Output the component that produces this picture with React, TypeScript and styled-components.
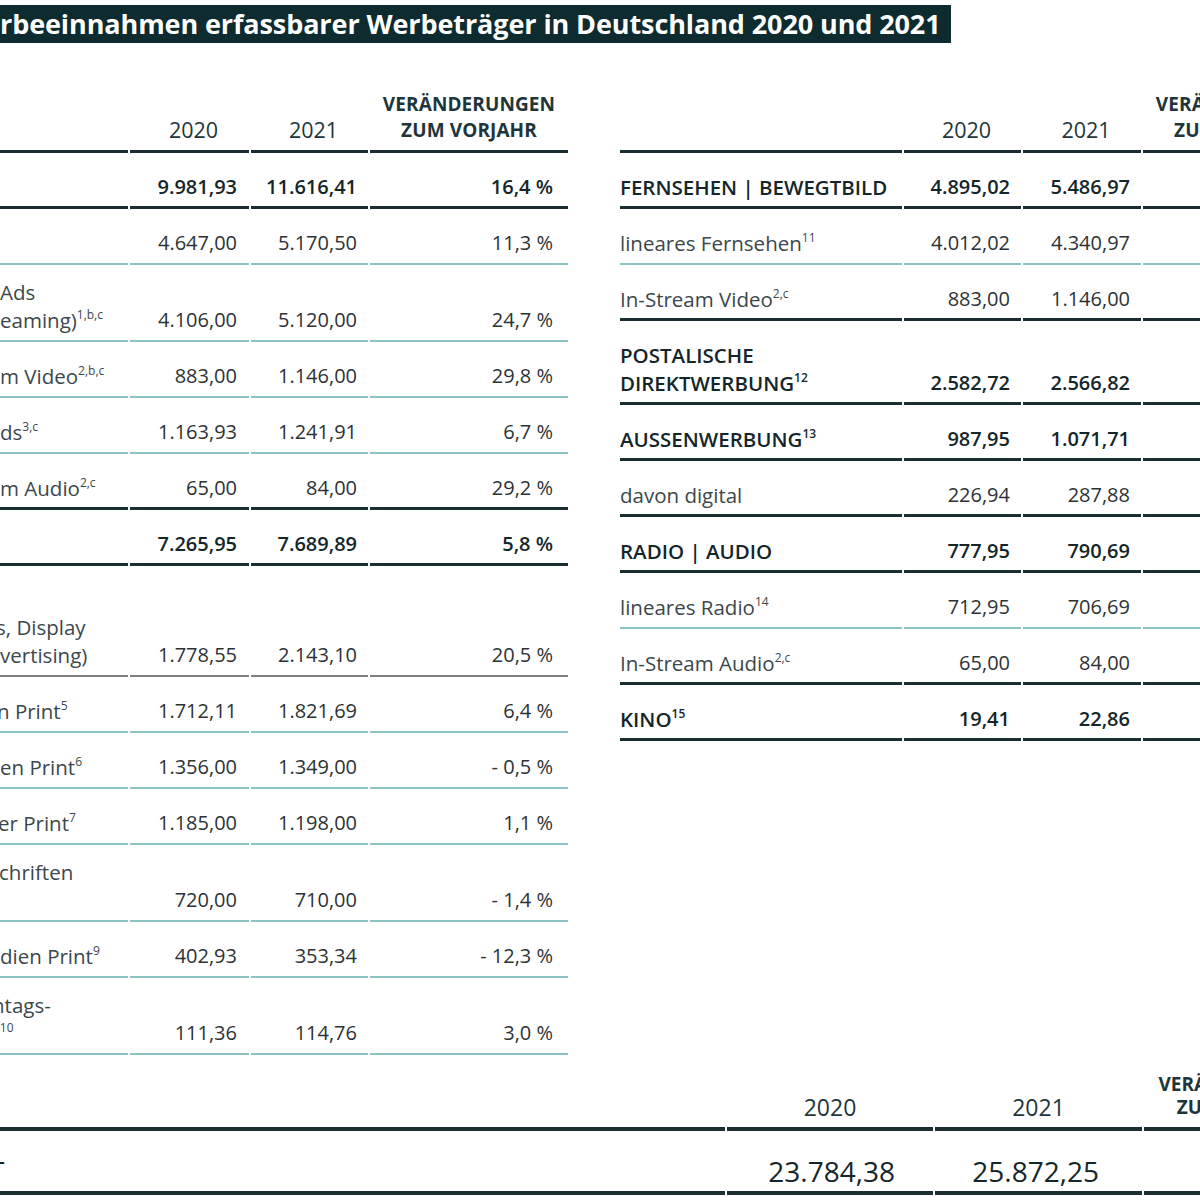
import React from 'react';
import styled, { createGlobalStyle } from 'styled-components';

type Line = 'dark' | 'teal' | 'gray';

interface RowData {
  label: React.ReactNode;
  v20: string;
  v21: string;
  ch: string;
  line: Line;
  bold?: boolean;
  pt?: number;
}

const Global = createGlobalStyle`
  html, body { margin: 0; padding: 0; background: #fff; }
  body { font-family: "Open Sans", "Noto Sans", "DejaVu Sans", sans-serif; }
`;

const Page = styled.div`
  width: 1200px;
  height: 1200px;
  overflow: hidden;
  background: #fff;
  display: flex;
  flex-direction: column;
`;

const TitleBar = styled.h1`
  margin: 5px 0 0 0;
  align-self: flex-start;
  height: 38px;
  padding: 0 10px 0 0;
  background: #0e2b30;
  color: #ffffff;
  font-size: 27px;
  font-weight: 700;
  line-height: 37px;
  white-space: nowrap;
  letter-spacing: -0.1px;
`;

const Main = styled.div`
  display: flex;
  gap: 52px;
  margin-top: 48px;
  align-items: flex-start;
`;

const Grid = styled.div<{ $cols: string }>`
  display: grid;
  grid-template-columns: ${(p) => p.$cols};
  column-gap: 2px;
  flex: none;
`;

const HeadCell = styled.div<{ $year?: boolean }>`
  display: flex;
  flex-direction: column;
  justify-content: flex-end;
  align-items: center;
  padding-bottom: 7px;
  padding-left: ${(p) => (p.$year ? 8 : 0)}px;
  border-bottom: 3px solid #1b2f33;
  font-size: 21.5px;
  line-height: 26px;
  font-weight: 500;
  color: #1e363b;
  white-space: nowrap;
`;

const HeadCaps = styled.span`
  font-size: 19px;
  font-weight: 700;
  letter-spacing: 0.1px;
`;

const lineStyle = (l: Line) =>
  l === 'dark' ? '3px solid #1b2f33' : l === 'teal' ? '2px solid #8cc3c5' : '2px solid #7b7f80';

const Cell = styled.div<{ $line: Line; $pt: number; $num?: boolean; $bold?: boolean; $pr?: number }>`
  display: flex;
  flex-direction: column;
  justify-content: flex-end;
  padding-top: ${(p) => p.$pt}px;
  padding-bottom: ${(p) => (p.$line === 'dark' ? 5 : 6)}px;
  padding-right: ${(p) => (p.$num ? p.$pr ?? 12 : 0)}px;
  border-bottom: ${(p) => lineStyle(p.$line)};
  text-align: ${(p) => (p.$num ? 'right' : 'left')};
  font-size: ${(p) => (p.$num ? 20 : 20.5)}px;
  line-height: 28px;
  white-space: nowrap;
  overflow: hidden;
  font-weight: ${(p) => (p.$bold ? 600 : 400)};
  color: ${(p) => (p.$bold ? '#15262a' : p.$num ? '#2d3235' : '#3b474b')};
`;

const Sup = styled.sup`
  font-size: 12px;
  line-height: 0;
  vertical-align: 9px;
`;

const Cut = styled.span<{ $shift: number }>`
  display: inline-block;
  margin-left: ${(p) => p.$shift}px;
`;

const Bottom = styled.div`
  margin-top: 18px;
`;

const BottomHead = styled.div`
  display: flex;
  flex-direction: column;
  justify-content: flex-end;
  align-items: center;
  padding-bottom: 8px;
  border-bottom: 4px solid #1b2f33;
  font-size: 23px;
  line-height: 23px;
  font-weight: 500;
  color: #1e363b;
  white-space: nowrap;
  font-stretch: 92%;
`;

const BottomCaps = styled.span`
  font-size: 19px;
  font-weight: 700;
`;

const TotalCell = styled.div<{ $pr: number; $num?: boolean }>`
  padding: 23px ${(p) => p.$pr}px 3px 0;
  border-bottom: 4px solid #1b2f33;
  text-align: ${(p) => (p.$num ? 'right' : 'left')};
  font-size: 28px;
  line-height: 34px;
  font-weight: 500;
  font-stretch: 93%;
  color: #15262a;
  white-space: nowrap;
  overflow: hidden;
`;

const leftRows: RowData[] = [
  { label: '', v20: '9.981,93', v21: '11.616,41', ch: '16,4 %', line: 'dark', bold: true },
  { label: '', v20: '4.647,00', v21: '5.170,50', ch: '11,3 %', line: 'teal' },
  {
    label: (
      <>
        <span>Ads</span>
        <span>
          eaming)<Sup>1,b,c</Sup>
        </span>
      </>
    ),
    v20: '4.106,00',
    v21: '5.120,00',
    ch: '24,7 %',
    line: 'teal',
    pt: 13,
  },
  { label: <span>m Video<Sup>2,b,c</Sup></span>, v20: '883,00', v21: '1.146,00', ch: '29,8 %', line: 'teal' },
  { label: <span>ds<Sup>3,c</Sup></span>, v20: '1.163,93', v21: '1.241,91', ch: '6,7 %', line: 'teal' },
  { label: <span>m Audio<Sup>2,c</Sup></span>, v20: '65,00', v21: '84,00', ch: '29,2 %', line: 'dark' },
  { label: '', v20: '7.265,95', v21: '7.689,89', ch: '5,8 %', line: 'dark', bold: true },
  {
    label: (
      <>
        <span>&nbsp;</span>
        <span>
          <Cut $shift={-4}>s, Display</Cut>
        </span>
        <span>vertising)</span>
      </>
    ),
    v20: '1.778,55',
    v21: '2.143,10',
    ch: '20,5 %',
    line: 'gray',
    pt: 19,
  },
  { label: <span><Cut $shift={-3}>n Print<Sup>5</Sup></Cut></span>, v20: '1.712,11', v21: '1.821,69', ch: '6,4 %', line: 'teal' },
  { label: <span>en Print<Sup>6</Sup></span>, v20: '1.356,00', v21: '1.349,00', ch: '- 0,5 %', line: 'teal' },
  { label: <span><Cut $shift={-2}>er Print<Sup>7</Sup></Cut></span>, v20: '1.185,00', v21: '1.198,00', ch: '1,1 %', line: 'teal' },
  {
    label: (
      <>
        <span><Cut $shift={-1}>chriften</Cut></span>
        <span>&nbsp;</span>
      </>
    ),
    v20: '720,00',
    v21: '710,00',
    ch: '- 1,4 %',
    line: 'teal',
    pt: 13,
  },
  { label: <span>dien Print<Sup>9</Sup></span>, v20: '402,93', v21: '353,34', ch: '- 12,3 %', line: 'teal' },
  {
    label: (
      <>
        <span><Cut $shift={-8}>ntags-</Cut></span>
        <span><Cut $shift={-4}><Sup>-10</Sup></Cut></span>
      </>
    ),
    v20: '111,36',
    v21: '114,76',
    ch: '3,0 %',
    line: 'teal',
    pt: 13,
  },
];

const rightRows: RowData[] = [
  { label: 'FERNSEHEN | BEWEGTBILD', v20: '4.895,02', v21: '5.486,97', ch: '12,1 %', line: 'dark', bold: true },
  { label: <span>lineares Fernsehen<Sup>11</Sup></span>, v20: '4.012,02', v21: '4.340,97', ch: '8,2 %', line: 'teal' },
  { label: <span>In-Stream Video<Sup>2,c</Sup></span>, v20: '883,00', v21: '1.146,00', ch: '29,8 %', line: 'dark' },
  {
    label: (
      <>
        <span>POSTALISCHE</span>
        <span>DIREKTWERBUNG<Sup>12</Sup></span>
      </>
    ),
    v20: '2.582,72',
    v21: '2.566,82',
    ch: '- 0,6 %',
    line: 'dark',
    bold: true,
  },
  { label: <span>AUSSENWERBUNG<Sup>13</Sup></span>, v20: '987,95', v21: '1.071,71', ch: '8,5 %', line: 'dark', bold: true },
  { label: 'davon digital', v20: '226,94', v21: '287,88', ch: '26,9 %', line: 'dark' },
  { label: 'RADIO | AUDIO', v20: '777,95', v21: '790,69', ch: '1,6 %', line: 'dark', bold: true },
  { label: <span>lineares Radio<Sup>14</Sup></span>, v20: '712,95', v21: '706,69', ch: '- 0,9 %', line: 'teal' },
  { label: <span>In-Stream Audio<Sup>2,c</Sup></span>, v20: '65,00', v21: '84,00', ch: '29,2 %', line: 'dark' },
  { label: <span>KINO<Sup>15</Sup></span>, v20: '19,41', v21: '22,86', ch: '17,8 %', line: 'dark', bold: true },
];

const Header: React.FC = () => (
  <>
    <HeadCell />
    <HeadCell $year>2020</HeadCell>
    <HeadCell $year>2021</HeadCell>
    <HeadCell>
      <HeadCaps>VERÄNDERUNGEN</HeadCaps>
      <HeadCaps>ZUM VORJAHR</HeadCaps>
    </HeadCell>
  </>
);

const Rows: React.FC<{ rows: RowData[]; pr: [number, number, number] }> = ({ rows, pr }) => (
  <>
    {rows.map((r, i) => {
      const pt = r.pt ?? 20;
      return (
        <React.Fragment key={i}>
          <Cell $line={r.line} $pt={pt} $bold={r.bold}>
            {r.label}
          </Cell>
          <Cell $line={r.line} $pt={pt} $bold={r.bold} $num $pr={pr[0]}>
            {r.v20}
          </Cell>
          <Cell $line={r.line} $pt={pt} $bold={r.bold} $num $pr={pr[1]}>
            {r.v21}
          </Cell>
          <Cell $line={r.line} $pt={pt} $bold={r.bold} $num $pr={pr[2]}>
            {r.ch}
          </Cell>
        </React.Fragment>
      );
    })}
  </>
);

export default function App() {
  return (
    <>
      <Global />
      <Page>
        <TitleBar>rbeeinnahmen erfassbarer Werbeträger in Deutschland 2020 und 2021</TitleBar>
        <Main>
          <Grid $cols="128px 119px 117px 198px">
            <Header />
            <Rows rows={leftRows} pr={[12, 11, 15]} />
          </Grid>
          <Grid $cols="282px 117px 118px 198px">
            <Header />
            <Rows rows={rightRows} pr={[11, 11, 15]} />
          </Grid>
        </Main>
        <Bottom>
          <Grid $cols="725px 206px 207px 200px">
            <BottomHead />
            <BottomHead>2020</BottomHead>
            <BottomHead>2021</BottomHead>
            <BottomHead>
              <BottomCaps>VERÄNDERUNGEN</BottomCaps>
              <BottomCaps>ZUM VORJAHR</BottomCaps>
            </BottomHead>
            <TotalCell $pr={0}>
              <Cut $shift={-11}>T</Cut>
            </TotalCell>
            <TotalCell $pr={38} $num>
              23.784,38
            </TotalCell>
            <TotalCell $pr={43} $num>
              25.872,25
            </TotalCell>
            <TotalCell $pr={15} $num>
              8,8 %
            </TotalCell>
          </Grid>
        </Bottom>
      </Page>
    </>
  );
}
